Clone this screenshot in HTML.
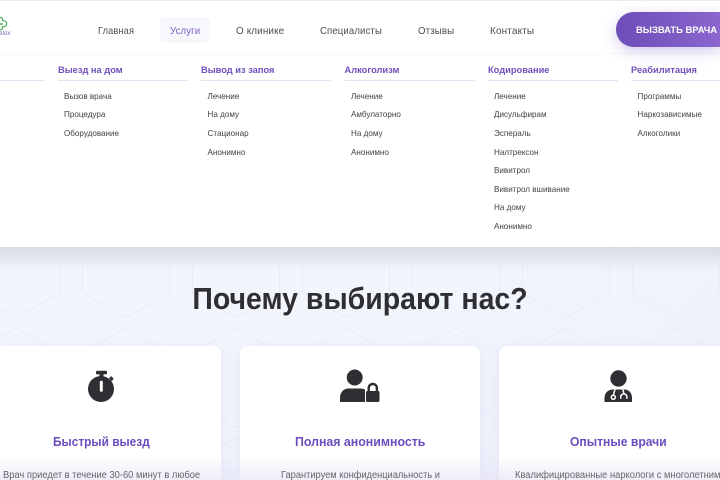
<!DOCTYPE html>
<html lang="ru">
<head>
<meta charset="utf-8">
<title>Почему выбирают нас</title>
<style>
html,body{margin:0;padding:0;width:720px;height:480px;overflow:hidden;background:#fff}
body{position:relative;font-family:"Liberation Sans","Noto Sans CJK SC",sans-serif}
.a{position:absolute;white-space:nowrap;transform-origin:left center}
#bg{position:absolute;left:0;top:247px;width:720px;height:233px;background:linear-gradient(135deg,#f3f5fd,#f1f5fc 50%,#eff1fb)}
#hdr{position:absolute;left:0;top:0;width:720px;height:54px;background:#fff;border-top:1px solid #ececec;box-sizing:border-box}
#menu{position:absolute;left:0;top:54px;width:720px;height:193px;background:#fff}
.n{top:24px;font-size:10.5px;line-height:14px;color:#4d4d4d;letter-spacing:.15px}
.h{top:63.500px;font-size:9.300px;line-height:12px;font-weight:bold;color:#6f50bd}
.l{height:1.500px;top:79.500px;width:130px;background:#e6e1f3}
.i{font-size:8.100px;line-height:10px;color:#424242}
.card{position:absolute;top:346px;height:134px;background:#fff;box-shadow:0 4px 14px rgba(100,100,180,.1)}
.t{top:434px;font-size:13px;line-height:16px;font-weight:bold;color:#6b4dbd}
.p{top:468.500px;font-size:9.700px;line-height:13px;color:#666}
</style>
</head>
<body>
<div id="bg"></div>
<svg class="a" style="left:0;top:247px" width="720" height="233">
<defs><pattern id="hx" x="-39" y="-29" width="110" height="110" patternUnits="userSpaceOnUse">
<path d="M55 0L98.500 25V75L55 100L11.500 75V25Z" fill="none" stroke="#e9ecf7" stroke-width="1"/>
</pattern>
<linearGradient id="sh" x1="0" y1="0" x2="0" y2="1"><stop offset="0" stop-color="#d8dae4"/><stop offset="1" stop-color="#d8dae4" stop-opacity="0"/></linearGradient></defs>
<rect width="720" height="233" fill="url(#hx)"/>
<rect width="720" height="24" fill="url(#sh)"/>
</svg>

<div id="menu"></div>
<div id="hdr"></div>
<div class="a" style="left:0;top:52px;width:720px;height:4px;background:linear-gradient(180deg,#fafafa,#fff)"></div>

<svg class="a" style="left:0;top:14px" width="12" height="20" viewBox="0 0 12 20">
<path d="M-2 3.500h2.200a2.200 2.200 0 0 1 2.300 2.200v1h1.200a2.800 2.800 0 0 1 0 6H2.500v1a2.200 2.200 0 0 1-2.300 2.200H-2" fill="none" stroke="#4fae5e" stroke-width="1.200"/>
<path d="M-1 10H3" stroke="#4fae5e" stroke-width="1.400"/>
</svg>
<div class="a" style="left:-1px;top:30px;font-size:6px;line-height:8px;color:#6f6bb0">etox</div>

<div class="a" style="left:160px;top:17px;width:50px;height:26px;background:#f7f8fb;border-radius:5px"></div>
<div class="a n" style="left:98px;transform:scaleX(.88)">Главная</div>
<div class="a n" style="left:170px;color:#7a5cc4;transform:scaleX(.91)">Услуги</div>
<div class="a n" style="left:236px;transform:scaleX(.94)">О клинике</div>
<div class="a n" style="left:320px;transform:scaleX(.91)">Специалисты</div>
<div class="a n" style="left:418px;transform:scaleX(.92)">Отзывы</div>
<div class="a n" style="left:490px;transform:scaleX(.95)">Контакты</div>

<div class="a" style="left:615.500px;top:12px;width:104.500px;height:35px;border-radius:18px 0 0 18px;background:linear-gradient(90deg,#6d4db8,#8a66cd);box-shadow:0 4px 14px rgba(110,80,190,.3)"></div>
<div class="a" style="left:636px;top:23px;font-size:9.400px;line-height:13px;font-weight:bold;color:#fff">ВЫЗВАТЬ ВРАЧА</div>

<div class="a l" style="left:0;width:45px"></div>
<div class="a h" style="left:58px">Выезд на дом</div><div class="a l" style="left:58px"></div>
<div class="a h" style="left:201px">Вывод из запоя</div><div class="a l" style="left:201px"></div>
<div class="a h" style="left:344.500px">Алкоголизм</div><div class="a l" style="left:344.500px"></div>
<div class="a h" style="left:488px">Кодирование</div><div class="a l" style="left:488px"></div>
<div class="a h" style="left:631px">Реабилитация</div><div class="a l" style="left:631px;width:89px"></div>

<div class="a i" style="left:64px;top:91.500px">Вызов врача</div>
<div class="a i" style="left:64px;top:110px">Процедура</div>
<div class="a i" style="left:64px;top:128.500px">Оборудование</div>

<div class="a i" style="left:207.500px;top:91.500px">Лечение</div>
<div class="a i" style="left:207.500px;top:110px">На дому</div>
<div class="a i" style="left:207.500px;top:128.500px">Стационар</div>
<div class="a i" style="left:207.500px;top:147.500px">Анонимно</div>

<div class="a i" style="left:351px;top:91.500px">Лечение</div>
<div class="a i" style="left:351px;top:110px">Амбулаторно</div>
<div class="a i" style="left:351px;top:128.500px">На дому</div>
<div class="a i" style="left:351px;top:147.500px">Анонимно</div>

<div class="a i" style="left:494px;top:91.500px">Лечение</div>
<div class="a i" style="left:494px;top:110px">Дисульфирам</div>
<div class="a i" style="left:494px;top:128.500px">Эспераль</div>
<div class="a i" style="left:494px;top:147.500px">Налтрексон</div>
<div class="a i" style="left:494px;top:166px">Вивитрол</div>
<div class="a i" style="left:494px;top:184.500px">Вивитрол вшивание</div>
<div class="a i" style="left:494px;top:203px">На дому</div>
<div class="a i" style="left:494px;top:222px">Анонимно</div>

<div class="a i" style="left:637.500px;top:91.500px">Программы</div>
<div class="a i" style="left:637.500px;top:110px">Наркозависимые</div>
<div class="a i" style="left:637.500px;top:128.500px">Алкоголики</div>

<div class="a" style="left:0;top:279px;width:720px;text-align:center;font-size:31px;line-height:40px;font-weight:bold;color:#2f2f33;transform:scaleX(.918);transform-origin:center">Почему выбирают нас?</div>

<div class="card" style="left:0;width:221px;border-radius:0 8px 0 0"></div>
<div class="card" style="left:240px;width:239.500px;border-radius:8px 8px 0 0"></div>
<div class="card" style="left:499px;width:221px;border-radius:8px 0 0 0"></div>

<svg class="a" style="left:0;top:360px" width="720" height="50" viewBox="0 360 720 50">
<g fill="#2f2f33">
<rect x="96" y="370.700" width="11" height="3.700" rx="1.200"/>
<rect x="99.500" y="373" width="4" height="4"/>
<path d="M109 378.500l2-2.500 2.800 2.800-2 2.200z"/>
<circle cx="101" cy="389" r="13"/>
</g>
<rect x="99.800" y="380.700" width="3" height="11" rx="1.200" fill="#fff"/>

<g fill="#2f2f33">
<circle cx="354.700" cy="377.500" r="8"/>
<path d="M340 402v-4.500c0-5 3.500-9 8.500-9h11c2 0 4 .3 5.500 1v12.500z"/>
<rect x="366" y="391" width="13.500" height="11" rx="1.500"/>
<path d="M367.500 392v-4a5.300 5.300 0 0 1 10.600 0v4h-2.400v-4a2.900 2.900 0 0 0-5.800 0v4z"/>
</g>

<g fill="#2f2f33">
<circle cx="618.500" cy="378.500" r="8.200"/>
<path d="M604.500 402v-4c0-5 3.500-8.500 8.500-8.500h11.500c4.500 0 7.500 3.500 7.500 8.500v4z"/>
</g>
<g fill="none" stroke="#fff" stroke-width="1.500">
<circle cx="613.300" cy="397.300" r="2"/>
<path d="M613.500 395c.2-2 .8-3.500 1.500-5.500"/>
<path d="M620.700 398.800v-1.800a3.100 3.100 0 0 1 6.200 0v1.800"/>
<path d="M623.800 394c0-1.800-.5-3-1-4.500"/>
</g>
</svg>

<div class="a t" style="left:53px;transform:scaleX(.915)">Быстрый выезд</div>
<div class="a t" style="left:295px;transform:scaleX(.95)">Полная анонимность</div>
<div class="a t" style="left:570px;transform:scaleX(.933)">Опытные врачи</div>

<div class="a" style="left:0;top:456px;width:720px;height:24px;background:linear-gradient(180deg,rgba(226,222,245,0),rgba(226,222,245,.55))"></div>

<div class="a p" style="left:3px;transform:scaleX(.965)">Врач приедет в течение 30-60 минут в любое</div>
<div class="a p" style="left:281px;transform:scaleX(.958)">Гарантируем конфиденциальность и</div>
<div class="a p" style="left:515px;transform:scaleX(.965)">Квалифицированные наркологи с многолетним</div>
</body>
</html>
